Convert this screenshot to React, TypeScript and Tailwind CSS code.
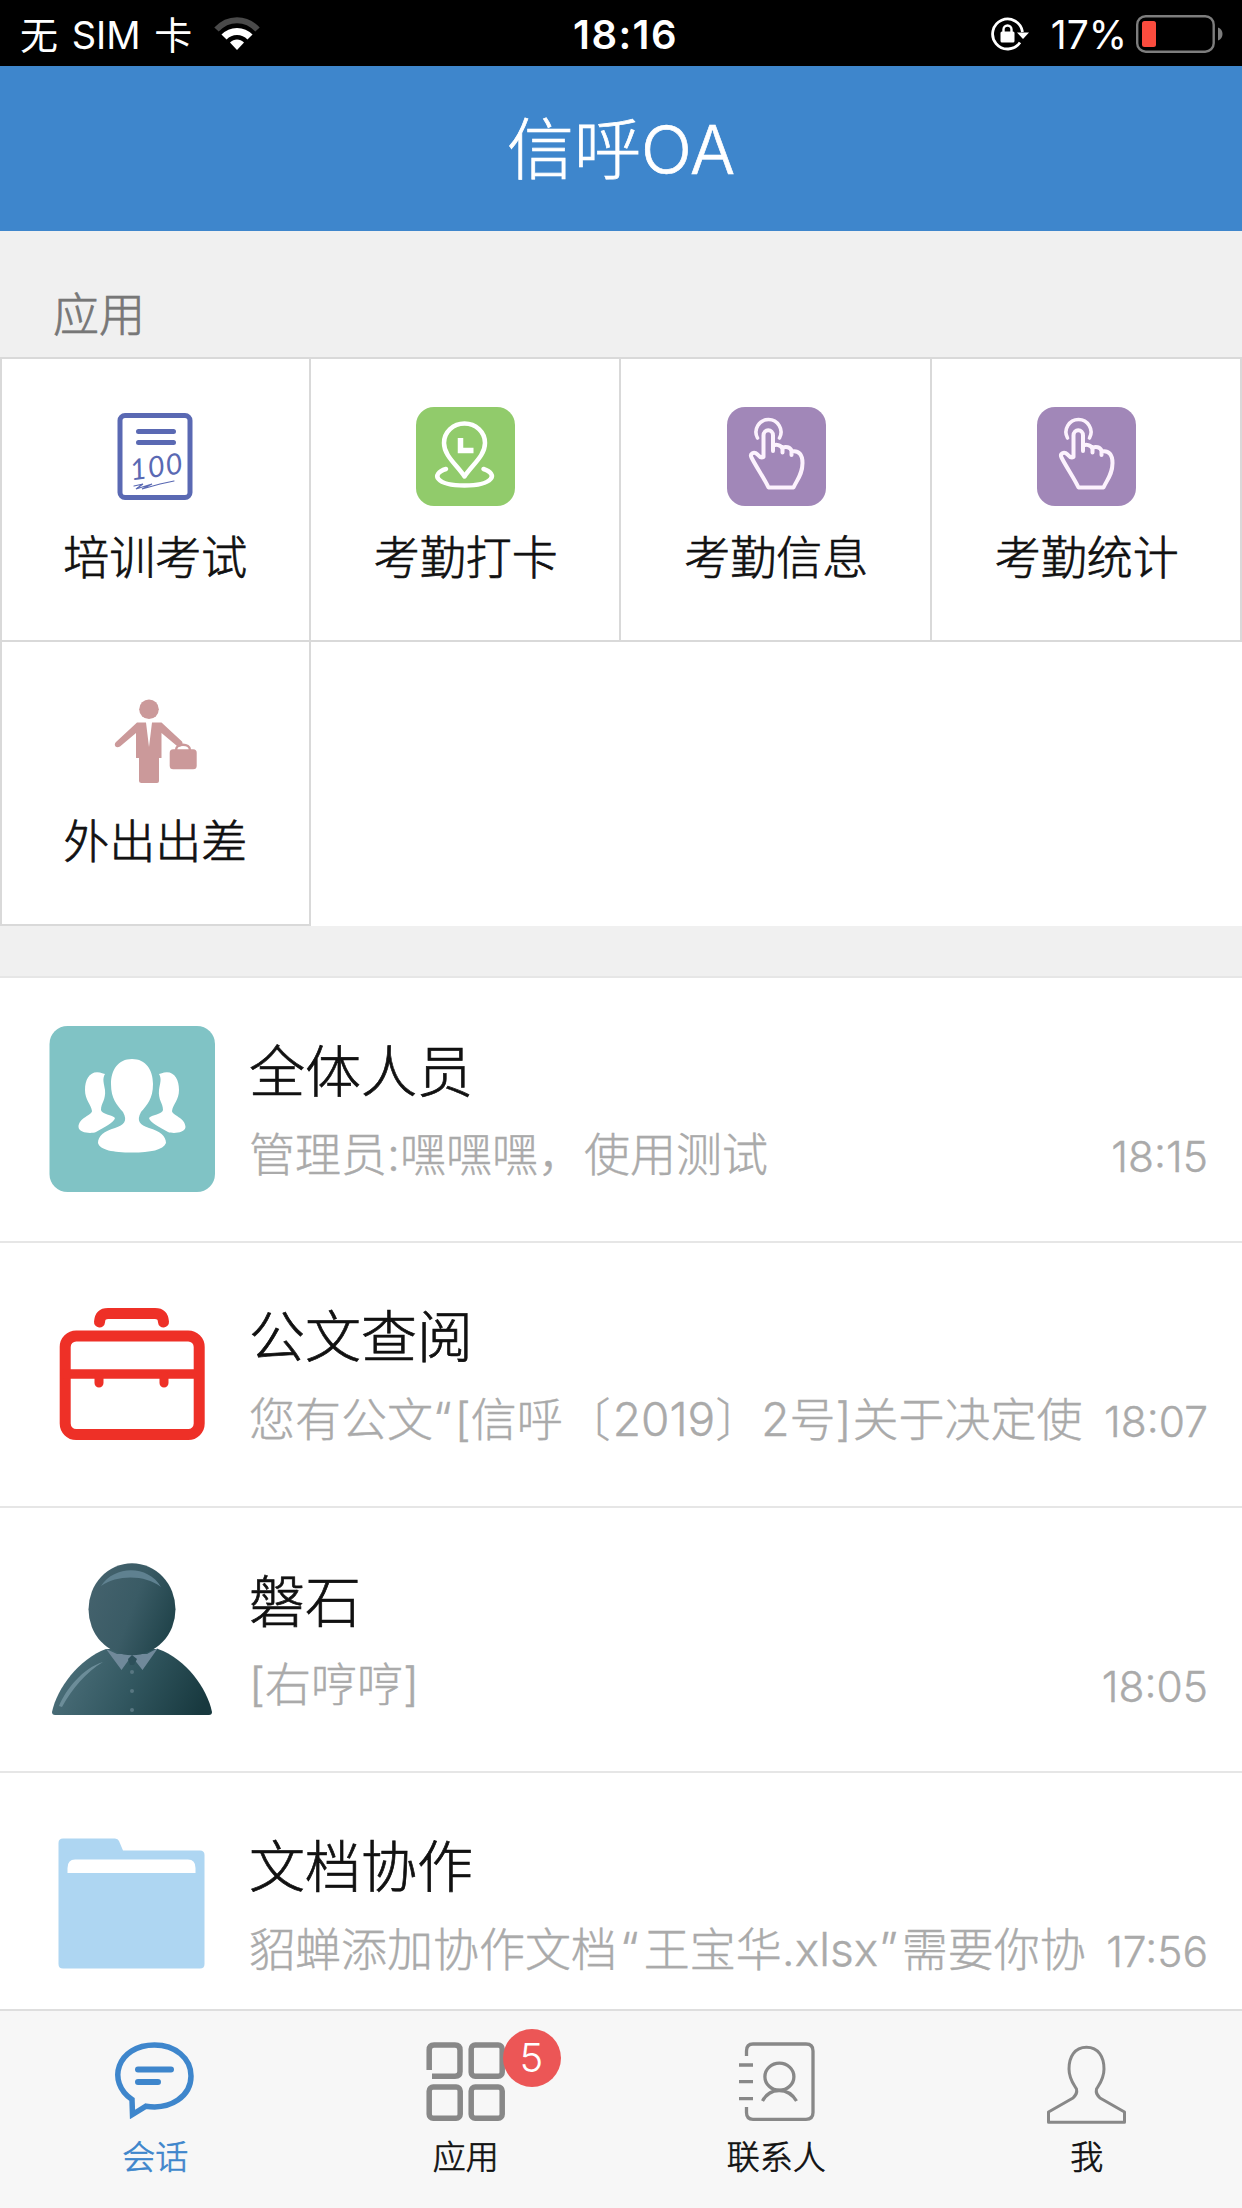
import type { ReactNode } from "react";

function WifiIcon() {
  return (
    <svg width="46" height="34" viewBox="0 0 46 34" fill="none">
      <path d="M2.500 12.500C14 0 32 0 43.500 12.500" stroke="#4a4a4a" strokeWidth="6" />
      <path d="M10 20C17 12.500 29 12.500 36 20" stroke="#fff" strokeWidth="7" />
      <path d="M16 25.500C20 21.500 26 21.500 30 25.500L23 33Z" fill="#fff" />
    </svg>
  );
}

function RotationLockIcon() {
  return (
    <svg width="38" height="34" viewBox="0 0 38 34" fill="none">
      <path d="M29 25.500A15 15 0 1 1 31.500 15" stroke="#fff" strokeWidth="2.800" />
      <path d="M26 15.500H38L32 22Z" fill="#fff" />
      <rect x="9.500" y="14.500" width="14" height="11" rx="1.500" fill="#fff" />
      <path d="M12.500 15V12.500a4 4 0 0 1 8 0V15" stroke="#fff" strokeWidth="2.400" />
    </svg>
  );
}

function BatteryIcon() {
  return (
    <svg width="88" height="38" viewBox="0 0 88 38" fill="none">
      <rect x="1.200" y="1.200" width="76.500" height="35.500" rx="8.500" stroke="#7d7d7d" strokeWidth="2.400" />
      <rect x="6" y="6" width="14" height="26" rx="2.500" fill="#fb4c3e" />
      <path d="M82 12.500c6 1.500 6 11.500 0 13Z" fill="#7d7d7d" />
    </svg>
  );
}

function ExamIcon() {
  return (
    <svg width="99" height="99" viewBox="0 0 99 99" fill="none" stroke="#5a69b3" strokeLinecap="round">
      <rect x="14" y="8.500" width="70" height="82" rx="5" strokeWidth="5" />
      <path d="M32.500 24.500H67.500M32.500 35.500H67.500" strokeWidth="5" />
      <text x="24" y="70" fontFamily="Lato, sans-serif" fontStyle="italic" fontWeight="400" fontSize="29" letterSpacing="1.200" fill="#5a69b3" stroke="none" transform="rotate(-8 50 62)">
        100
      </text>
      <path d="M28 79L37 77L30 82L46 77L36 82L54 77L68 74" strokeWidth="1.200" />
    </svg>
  );
}

function PinIcon() {
  return (
    <svg width="99" height="99" viewBox="0 0 99 99" fill="none" stroke="#fff" strokeWidth="4.500" strokeLinecap="round" strokeLinejoin="round">
      <rect width="99" height="99" rx="18" fill="#91cb6b" stroke="none" />
      <path d="M48.500 69.500C41 58 28 49 28 36A20.500 19.500 0 0 1 69 36C69 49 56 58 48.500 69.500Z" />
      <path d="M44.500 31V43.500H57.500" strokeWidth="5.500" strokeLinecap="butt" strokeLinejoin="miter" />
      <path d="M30 62C14 67 20 78.500 48.500 78.500S83 67 67.500 62" />
    </svg>
  );
}

function TapIcon() {
  return (
    <svg width="99" height="99" viewBox="0 0 99 99" fill="none" stroke="#fcf2fd" strokeWidth="4" strokeLinecap="round" strokeLinejoin="round">
      <rect width="99" height="99" rx="18" fill="#a187b8" stroke="none" />
      <path d="M30.500 31A12.500 12.500 0 1 1 52.500 31" strokeWidth="3.600" />
      <path d="M36.500 50V28.500C36.500 21.500 46 21.500 46 28.500V44V39C48.500 36.500 54.500 38 55.500 42V45.500V41C58.500 39 63.500 40 64.500 44V48V44.500C72 43 75.500 48 75.500 56C75.500 67 70.500 72 66.500 80.500H41.500C36.500 70 31 63 24.500 50.500C22.500 46.500 27 44 30.500 47.500C32.500 50 34.500 51 36.500 50Z" />
    </svg>
  );
}

function TravelIcon() {
  return (
    <svg width="99" height="99" viewBox="0 0 99 99" fill="#cb999a">
      <circle cx="43" cy="18.300" r="9.800" />
      <path d="M31 31.500H40L43 56L46 31.500H55.500L76 50.500C78 54 74 57 71 55L55.500 42V67H53V90Q53 92 51 92H35.500Q33 92 33 90V67H30V42L14 55.500C10 58 7 54 10 51Z" />
      <rect x="63.700" y="58.300" width="27" height="20" rx="3.500" />
      <path d="M70 59C70 52 84 52 84 59" fill="none" stroke="#cb999a" strokeWidth="2.500" />
    </svg>
  );
}

function PeopleAvatar() {
  const side =
    "M54 47.500C42 43 36 52 36 64C36 74 42 78 43 85C43 89 29.500 92 29.500 101C30 107 42 108 47 106C55 101 65 97 66 92C64 89 52 88 52 84C52 77 57 74 56 64C55 57 53 53 56 48Z";
  return (
    <svg width="166" height="166" viewBox="0 0 166 166" fill="#fff">
      <rect x="0.500" width="165.500" height="166" rx="18" fill="#80c3c5" />
      <path d={side} />
      <path d={side} transform="translate(166 0) scale(-1 1)" />
      <path
        d="M83 33C69 33 62 44 62 58C62 73 68 79 74 86C79 95 75 99 66 102C55 105 49 110 49 117C51 124 64 126.500 83 126.500S114 124 117 117C117 110 111 105 100 102C91 99 87 95 92 86C98 79 104 73 104 58C104 44 97 33 83 33Z"
        stroke="#80c3c5"
        strokeWidth="3"
        paintOrder="stroke"
      />
    </svg>
  );
}

function BriefcaseAvatar() {
  return (
    <svg width="166" height="166" viewBox="0 0 166 166" fill="none" stroke="#ee3027" strokeWidth="11" strokeLinecap="round">
      <rect x="16.200" y="45" width="134" height="98.500" rx="11" />
      <path d="M16 83H150" strokeWidth="9.500" />
      <path d="M50 85V92M115 85V92" strokeWidth="9" />
      <path d="M50.500 31C51 25 54 22.500 59 22.500H106C111 22.500 114 25 114.500 31" />
    </svg>
  );
}

function PersonAvatar() {
  return (
    <svg width="166" height="166" viewBox="0 0 166 166">
      <defs>
        <linearGradient id="body" x1="0" y1="0.400" x2="1" y2="0.600">
          <stop offset="0" stopColor="#4d707b" />
          <stop offset="0.500" stopColor="#325760" />
          <stop offset="1" stopColor="#18393f" />
        </linearGradient>
        <linearGradient id="head" x1="0" y1="0.300" x2="1" y2="0.700">
          <stop offset="0" stopColor="#44626d" />
          <stop offset="0.500" stopColor="#3a5b65" />
          <stop offset="1" stopColor="#1f4249" />
        </linearGradient>
      </defs>
      <path d="M3 156C8 132 30 103 57 93H109C137 103 158 132 163 156Q163 159 160 159H6Q3 159 3 156Z" fill="url(#body)" />
      <path d="M10 150C17 133 34 112 54 106C37 116 23 133 13 151Z" fill="#6c8d99" />
      <path d="M57 93L72.500 114L82.500 100L93.500 114L109 92L98 98H68Z" fill="#70899a" />
      <ellipse cx="83" cy="53.300" rx="43.500" ry="46" fill="url(#head)" />
      <path d="M79 103L83 99L88 103L85 109H81Z" fill="#2d505a" />
      <path d="M52 30C66 9 99 9 112 31C97 19 69 18 52 30Z" fill="#5f8190" />
      <g fill="#587681">
        <circle cx="83" cy="116" r="2" />
        <circle cx="83" cy="135" r="2" />
        <circle cx="83" cy="154" r="2" />
      </g>
    </svg>
  );
}

function FolderAvatar() {
  return (
    <svg width="166" height="166" viewBox="0 0 166 166">
      <path d="M14 17.500H66Q69 17.500 70 20L74 29.500H151Q155.500 29.500 155.500 34V143Q155.500 147.500 151 147.500H14Q9.500 147.500 9.500 143V22Q9.500 17.500 14 17.500Z" fill="#aed6f2" />
      <path d="M18.500 52V47Q18.500 38.500 26 38.500H139Q146.500 38.500 146.500 47V52Z" fill="#fff" />
    </svg>
  );
}

function ChatTabIcon() {
  return (
    <svg width="80" height="80" viewBox="0 0 80 80" fill="none" stroke="#3e86cc" strokeWidth="5.500" strokeLinecap="round">
      <path d="M17 57.500C-9 40 2 3 39.500 3C60 3 76 16 76 34C76 54 56 68 31 64.200L17.500 72.500Z" strokeLinejoin="miter" />
      <path d="M23 27.500H56M23 40H43" strokeWidth="6" />
    </svg>
  );
}

function AppsTabIcon() {
  return (
    <svg width="80" height="80" viewBox="0 0 80 80" fill="none" stroke="#888" strokeWidth="5.500">
      <path d="M3.200 28V8Q3.200 3 8 3H29Q34 3 34 8V29.500Q34 34.300 29 34.300H6" />
      <rect x="45.200" y="3" width="31" height="31.300" rx="4" />
      <rect x="3.200" y="45" width="31" height="31.300" rx="4" />
      <rect x="45.200" y="45" width="31" height="31.300" rx="4" />
    </svg>
  );
}

function ContactsTabIcon() {
  return (
    <svg width="80" height="80" viewBox="0 0 80 80" fill="none" stroke="#888" strokeWidth="3.300">
      <path d="M10.500 14V9Q10.500 2 17 2H70Q77 2 77 9V70.500Q77 77.300 70 77.300H17Q10.500 77.300 10.500 70.500V65" />
      <path d="M3 23H17M3 39.700H17M3 56.700H17" />
      <ellipse cx="43.400" cy="34.700" rx="14.500" ry="13.500" />
      <path d="M26.500 59C34 45 52 45 60.500 59" />
    </svg>
  );
}

function MeTabIcon() {
  return (
    <svg width="80" height="84" viewBox="0 0 80 84" fill="none" stroke="#888" strokeWidth="3" strokeLinejoin="round">
      <path d="M39.500 5.300C27.500 5.300 22 15 22 27C22 37 26.500 42 29.500 47C30.500 51 29 53 26 56L1.500 70V80.300H77.500V70L53 56C50 53 48.500 51 49.500 47C52.500 42 57 37 57 27C57 15 51.500 5.300 39.500 5.300Z" />
    </svg>
  );
}

const apps: { label: string; icon: ReactNode }[] = [
  { label: "培训考试", icon: <ExamIcon /> },
  { label: "考勤打卡", icon: <PinIcon /> },
  { label: "考勤信息", icon: <TapIcon /> },
  { label: "考勤统计", icon: <TapIcon /> },
  { label: "外出出差", icon: <TravelIcon /> },
];

const chats: { title: string; message: ReactNode; time: string; avatar: ReactNode }[] = [
  { title: "全体人员", message: "管理员:嘿嘿嘿，使用测试", time: "18:15", avatar: <PeopleAvatar /> },
  {
    title: "公文查阅",
    message: (
      <>
        您有公文<span className="tracking-[3px]">“</span>[信<span className="tracking-[2px]">呼〔</span>2019〕2号<span className="tracking-[1px]">]</span>关于决定使
      </>
    ),
    time: "18:07",
    avatar: <BriefcaseAvatar />,
  },
  { title: "磐石", message: "[右哼哼]", time: "18:05", avatar: <PersonAvatar /> },
  {
    title: "文档协作",
    message: (
      <>
        貂蝉添加协作文档<span className="ml-[3px] tracking-[5px]">“</span>王宝华.xlsx<span className="ml-[1px] tracking-[4px]">”</span>需要你协
      </>
    ),
    time: "17:56",
    avatar: <FolderAvatar />,
  },
];

const tabs: { label: string; icon: ReactNode; active?: boolean; badge?: string }[] = [
  { label: "会话", icon: <ChatTabIcon />, active: true },
  { label: "应用", icon: <AppsTabIcon />, badge: "5" },
  { label: "联系人", icon: <ContactsTabIcon /> },
  { label: "我", icon: <MeTabIcon /> },
];

export default function App() {
  return (
    <div className="flex h-[2208px] w-[1242px] flex-col overflow-hidden bg-[#f0f0f0] font-['Inter','Noto_Sans_CJK_SC',sans-serif] font-light text-[#111] [-webkit-text-stroke:0.7px]">
      <div className="grid h-[66px] shrink-0 grid-cols-3 items-center bg-black text-[38px] leading-[66px] font-normal whitespace-nowrap text-white [-webkit-text-stroke:0px]">
        <div className="flex items-center pl-[20px]">
          <span className="pt-[2px] [word-spacing:3px]">无 SIM 卡</span>
          <span className="ml-[22px]"><WifiIcon /></span>
        </div>
        <div className="pt-[2px] pl-[9px] text-center text-[40px] font-semibold tracking-[1.4px]">18:16</div>
        <div className="flex items-center justify-end pr-[18px]">
          <RotationLockIcon />
          <span className="ml-[22px] pt-[2px] text-[39px]">17%</span>
          <span className="ml-[9px]"><BatteryIcon /></span>
        </div>
      </div>

      <header className="flex h-[165px] shrink-0 items-center justify-center bg-[#3e86cc] pt-[2px] text-[67px] leading-none text-white">
        信呼OA
      </header>

      <h2 className="h-[126px] shrink-0 pt-[58px] pl-[53px] text-[46px] leading-[50px] text-[#777]">应用</h2>

      <div className="grid shrink-0 grid-cols-4 grid-rows-[283px_286px] bg-white">
        {apps.map((app, i) => (
          <div
            key={app.label}
            className={
              "flex flex-col items-center border-t-2 border-r-2 border-[#d9d9d9] " +
              (i % 4 === 0 ? "border-l-2 " : "pl-[2px] ") +
              (i === 4 ? "border-b-2 pt-[49px]" : "pt-[48px]")
            }
          >
            {app.icon}
            <span className="mt-[26px] text-[46px] leading-[50px] whitespace-nowrap">{app.label}</span>
          </div>
        ))}
        <div className="col-span-3 border-t-2 border-[#d9d9d9]" />
      </div>

      <div className="mt-[50px] flex min-h-0 flex-1 flex-col overflow-hidden bg-white">
        {chats.map((chat) => (
          <div key={chat.title} className="flex h-[265px] shrink-0 border-t-2 border-[#e6e6e6] pt-[48px] pr-[34px] pl-[49px]">
            <div className="shrink-0">{chat.avatar}</div>
            <div className="ml-[34px] flex min-w-0 flex-1 flex-col whitespace-nowrap">
              <div className="mt-[14px] text-[56px] leading-[64px]">{chat.title}</div>
              <div className="mt-[19px] flex items-center justify-between text-[46px] leading-[56px] text-[#aaa] [-webkit-text-stroke:0.4px]">
                <span>{chat.message}</span>
                <span className="mt-[6px] text-[42.500px]">{chat.time}</span>
              </div>
            </div>
          </div>
        ))}
      </div>

      <nav className="grid h-[199px] shrink-0 grid-cols-4 border-t-2 border-[#dedede] bg-[#f7f7f7]">
        {tabs.map((tab) => (
          <div key={tab.label} className="flex flex-col items-center pt-[31px]">
            <div className="relative h-[80px] w-[80px]">
              {tab.icon}
              {tab.badge && (
                <span className="absolute -top-[13px] left-[77px] flex h-[58px] w-[58px] items-center justify-center rounded-full bg-[#ec5656] pr-[1px] text-[40px] leading-none text-white [-webkit-text-stroke:0px]">
                  {tab.badge}
                </span>
              )}
            </div>
            <span className={"mt-[15px] text-[33px] leading-[40px] " + (tab.active ? "text-[#3e86cc]" : "text-[#111]")}>{tab.label}</span>
          </div>
        ))}
      </nav>
    </div>
  );
}
